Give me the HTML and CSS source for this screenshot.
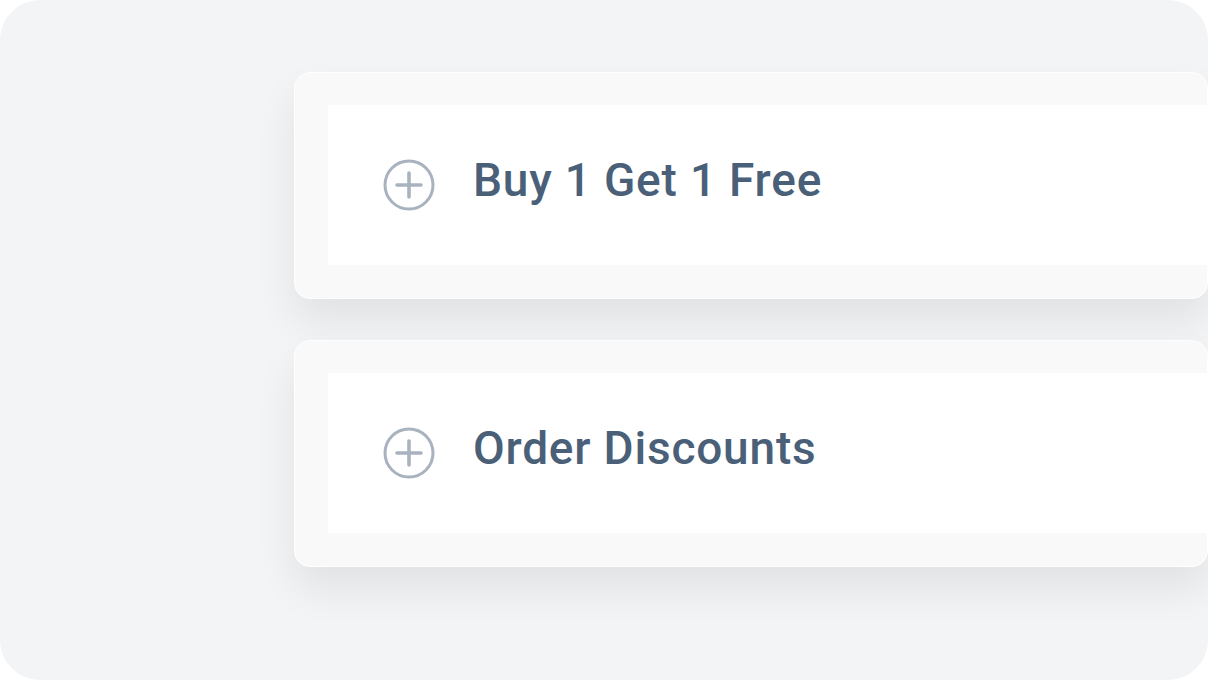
FILE: index.html
```html
<!DOCTYPE html>
<html>
<head>
<meta charset="utf-8">
<link rel="stylesheet" href="styles.css">
</head>
<body>
<div class="frame">
  <div class="list">
    <div class="card">
      <div class="panel">
        <svg class="icon" width="52" height="52" viewBox="0 0 52 52">
          <circle cx="26" cy="26" r="24" fill="none" stroke="#a9b3bf" stroke-width="3"/>
          <path d="M14 26H38M26 14V38" stroke="#a9b3bf" stroke-width="3.6" stroke-linecap="round"/>
        </svg>
        <span class="label">Buy 1 Get 1 Free</span>
      </div>
    </div>
    <div class="card">
      <div class="panel">
        <svg class="icon" width="52" height="52" viewBox="0 0 52 52">
          <circle cx="26" cy="26" r="24" fill="none" stroke="#a9b3bf" stroke-width="3"/>
          <path d="M14 26H38M26 14V38" stroke="#a9b3bf" stroke-width="3.6" stroke-linecap="round"/>
        </svg>
        <span class="label">Order Discounts</span>
      </div>
    </div>
  </div>
</div>
</body>
</html>
```
FILE: styles.css
```css
html, body {
  margin: 0;
  padding: 0;
  background: #ffffff;
}
.frame {
  width: 1208px;
  height: 680px;
  background: #f3f4f6;
  border-radius: 40px;
  overflow: hidden;
  box-sizing: border-box;
  padding: 72px 0 0 294px;
  font-family: Roboto, "Noto Sans", sans-serif;
}
.list {
  display: flex;
  flex-direction: column;
  gap: 41px;
}
.card {
  box-sizing: border-box;
  height: 227px;
  background: #f9f9fa;
  border: 1px solid #ffffff;
  border-radius: 16px;
  padding: 32px 0 32px 33px;
  box-shadow: 0 22px 40px rgba(0, 0, 0, 0.075);
}
.panel {
  height: 160px;
  background: #ffffff;
  display: flex;
  align-items: center;
  padding-left: 55px;
  gap: 38px;
}
.icon {
  flex: none;
  margin-bottom: 1px;
}
.label {
  font-size: 46px;
  font-weight: 500;
  color: #4a5f78;
  letter-spacing: 0.8px;
  margin-bottom: 10px;
}
```
